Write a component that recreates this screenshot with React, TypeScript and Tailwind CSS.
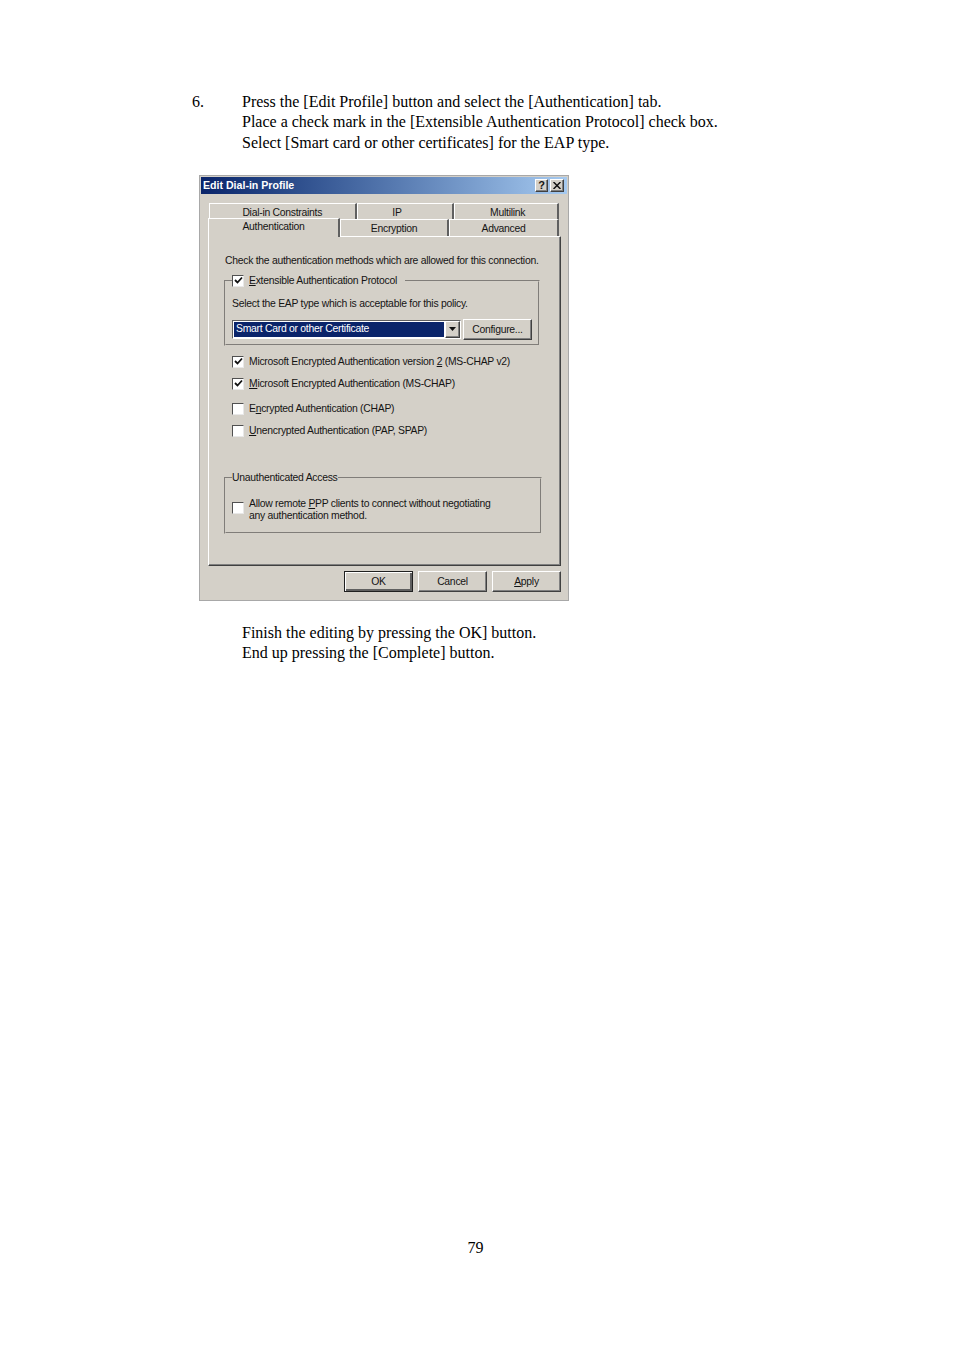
import type { ReactNode } from "react";

const raised =
  "border border-t-white border-l-white border-r-[#404040] border-b-[#404040] shadow-[inset_-1px_-1px_0_#808080]";

function Check({ checked }: { checked?: boolean }) {
  return (
    <span className="w-[12px] h-[12px] shrink-0 bg-white border border-t-[#505050] border-l-[#505050] border-r-[#e8e8e8] border-b-[#e8e8e8] flex items-center justify-center">
      {checked && (
        <svg width="9" height="9" viewBox="0 0 9 9">
          <path d="M1 4 L3.5 6.5 L8 1.5" fill="none" stroke="#111" strokeWidth="1.8" />
        </svg>
      )}
    </span>
  );
}

function Option({ checked, className, children }: { checked?: boolean; className: string; children: ReactNode }) {
  return (
    <div className={`flex items-center gap-[5px] ml-[23px] h-[12px] ${className}`}>
      <Check checked={checked} />
      <span className="whitespace-nowrap">{children}</span>
    </div>
  );
}

function Tab({ w, label, className }: { w: string; label: string; className?: string }) {
  return (
    <div className={`${w} h-full pt-[3px] flex items-center justify-center bg-[#d4d0c8] border-t border-t-white border-l border-l-white border-r-2 border-r-[#606060] ${className ?? ""}`}>
      {label}
    </div>
  );
}

function Button({ w, className, children }: { w: string; className?: string; children: ReactNode }) {
  return (
    <div className={`${w} h-[21px] pt-[1px] flex items-center justify-center ${className ?? raised}`}>{children}</div>
  );
}

function EditProfileDialog() {
  return (
    <div className="w-[370px] h-[426px] ml-[199px] mt-[21.5px] bg-[#d4d0c8] border border-[#a8a8a8] text-[#141414] text-[10.4px] tracking-[-0.27px] leading-[12px] font-['Liberation_Sans',sans-serif] flex flex-col">
      <div className="mx-[1px] mt-[1px] h-[17px] shrink-0 pl-[2px] pr-[3px] flex items-center justify-between bg-gradient-to-r from-[#0a246a] to-[#a6caf0] text-white font-bold text-[10.6px] tracking-normal">
        <span>Edit Dial-in Profile</span>
        <div className="flex gap-[2px]">
          <div className={`w-[13px] h-[13px] bg-[#d4d0c8] text-[#111] text-[11px] flex items-center justify-center ${raised}`}>?</div>
          <div className={`w-[14px] h-[13px] bg-[#d4d0c8] flex items-center justify-center ${raised}`}>
            <svg width="8" height="7" viewBox="0 0 8 7">
              <path d="M0.5 0 L7.5 7 M7.5 0 L0.5 7" stroke="#111" strokeWidth="1.5" />
            </svg>
          </div>
        </div>
      </div>

      <div className="ml-[9px] mt-[9px] w-[350px] h-[16px] shrink-0 flex">
        <Tab w="w-[148px]" label="Dial-in Constraints" />
        <Tab w="w-[98px]" label="IP" className="pr-[16px]" />
        <Tab w="w-[105px]" label="Multilink" className="pl-[3px]" />
      </div>
      <div className="ml-[8px] w-[351px] h-[17px] shrink-0 flex relative z-10">
        <div className="w-[132px] h-[19px] -mt-[1px] pb-[2px] flex items-center justify-center bg-[#d4d0c8] border-t border-t-white border-l border-l-white border-r-2 border-r-[#606060]">
          Authentication
        </div>
        <Tab w="w-[109px]" label="Encryption" />
        <Tab w="w-[110px]" label="Advanced" />
      </div>

      <div className="ml-[8px] w-[353px] h-[330px] shrink-0 border border-t-white border-l-white border-r-[#404040] border-b-[#404040] shadow-[inset_-1px_-1px_0_#808080] flex flex-col">
        <div className="ml-[16px] mt-[18px] whitespace-nowrap">Check the authentication methods which are allowed for this connection.</div>

        <fieldset className="ml-[15px] mt-[8px] w-[316px] h-[71px] [border-style:groove] border-2 border-[#d4d0c8] px-[6px]">
          <legend className="flex items-center gap-[5px] pr-[8px]">
            <Check checked />
            <span className="whitespace-nowrap"><u>E</u>xtensible Authentication Protocol</span>
          </legend>
          <div className="mt-[11px] whitespace-nowrap">Select the EAP type which is acceptable for this policy.</div>
          <div className="mt-[9px] flex items-center">
            <div className="w-[229px] h-[19px] flex bg-white border border-t-[#606060] border-l-[#606060] border-r-white border-b-white">
              <div className="flex-1 m-[1px] pl-[2px] flex items-center bg-[#0a246a] text-white">Smart Card or other Certificate</div>
              <div className={`w-[15px] bg-[#d4d0c8] flex items-center justify-center ${raised}`}>
                <svg width="7" height="4" viewBox="0 0 7 4"><path d="M0 0 H7 L3.5 4 Z" fill="#111" /></svg>
              </div>
            </div>
            <Button w="w-[69px] ml-[2px]">Configure...</Button>
          </div>
        </fieldset>

        <Option checked className="mt-[10px]">Microsoft Encrypted Authentication version <u>2</u> (MS-CHAP v2)</Option>
        <Option checked className="mt-[10px]"><u>M</u>icrosoft Encrypted Authentication (MS-CHAP)</Option>
        <Option className="mt-[13px]">E<u>n</u>crypted Authentication (CHAP)</Option>
        <Option className="mt-[10px]"><u>U</u>nencrypted Authentication (PAP, SPAP)</Option>

        <fieldset className="ml-[15px] mt-[35px] w-[318px] h-[62px] [border-style:groove] border-2 border-[#d4d0c8] px-[6px]">
          <legend className="whitespace-nowrap">Unauthenticated Access</legend>
          <div className="mt-[14px] flex items-center gap-[5px]">
            <div className="-mt-[4px]">
              <Check />
            </div>
            <span className="whitespace-nowrap leading-[12px]">
              Allow remote <u>P</u>PP clients to connect without negotiating
              <br />
              any authentication method.
            </span>
          </div>
        </fieldset>
      </div>

      <div className="mt-[5px] ml-[144px] flex gap-[5px]">
        <Button w="w-[69px]" className="border border-[#202020] shadow-[inset_1px_1px_0_#fff,inset_-2px_-2px_0_#606060]">OK</Button>
        <Button w="w-[69px]">Cancel</Button>
        <Button w="w-[69px]"><span><u>A</u>pply</span></Button>
      </div>
    </div>
  );
}

export default function App() {
  return (
    <div className="w-[954px] h-[1351px] bg-white text-black font-['Liberation_Serif',serif] text-[16px] leading-[20.5px] flex flex-col">
      <div className="mt-[91.5px] ml-[192px] flex">
        <div className="w-[50px]">6.</div>
        <div>
          <p>Press the [Edit Profile] button and select the [Authentication] tab.</p>
          <p>Place a check mark in the [Extensible Authentication Protocol] check box.</p>
          <p>Select [Smart card or other certificates] for the EAP type.</p>
        </div>
      </div>

      <EditProfileDialog />

      <div className="ml-[242px] mt-[22px]">
        <p>Finish the editing by pressing the OK] button.</p>
        <p>End up pressing the [Complete] button.</p>
      </div>

      <div className="mt-[574px] pr-[3px] text-center">79</div>
    </div>
  );
}
